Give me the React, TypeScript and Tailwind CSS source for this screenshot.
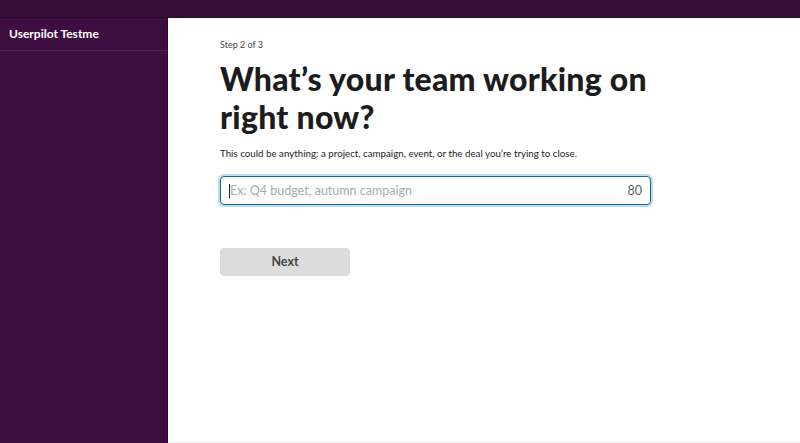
export default function App() {
  return (
    <div className="w-[800px] h-[443px] flex flex-col overflow-hidden" style={{ fontFamily: 'Lato, "Noto Sans", sans-serif' }}>
      <div className="h-[18px] bg-[#350d36] border-b border-[#2a0a2b] shrink-0" />
      <div className="flex flex-1 min-h-0">
        <div className="w-[168px] bg-[#3f0e40] shrink-0 border-r border-[#2a0a2b]">
          <div className="h-[33px] border-b border-[#522653] px-[9px] flex items-center">
            <span className="text-white text-[12px] font-bold">Userpilot Testme</span>
          </div>
        </div>
        <div className="flex-1 bg-white pl-[52px] pt-[22px] border-b border-[#f0f0f0]">
          <div className="text-[9px] leading-[1.2] text-[#454545]">Step 2 of 3</div>
          <h1 className="mt-[9px] text-[32px] leading-[38px] font-black text-[#1d1c1d] tracking-[0.25px] w-[470px]">
            What’s your team working on right now?
          </h1>
          <p className="mt-[12px] text-[9.75px] leading-[1.2] text-[#1d1c1d]">
            This could be anything: a project, campaign, event, or the deal you’re trying to close.
          </p>
          <div className="mt-[17px] w-[431px] h-[29px] rounded-[4px] border border-[#1264a3] shadow-[0_0_0_2px_#bcdcf2] flex items-center px-[8px]">
            <span className="w-px h-[14px] bg-[#1d1c1d]" />
            <span className="flex-1 text-[12.5px] text-[#aaaaaa]">Ex: Q4 budget, autumn campaign</span>
            <span className="text-[12.5px] text-[#616061]">80</span>
          </div>
          <button className="mt-[43px] w-[130px] h-[28px] rounded-[4px] bg-[#dddddd] text-[12.5px] font-bold text-[#454545]">
            Next
          </button>
        </div>
      </div>
    </div>
  );
}
